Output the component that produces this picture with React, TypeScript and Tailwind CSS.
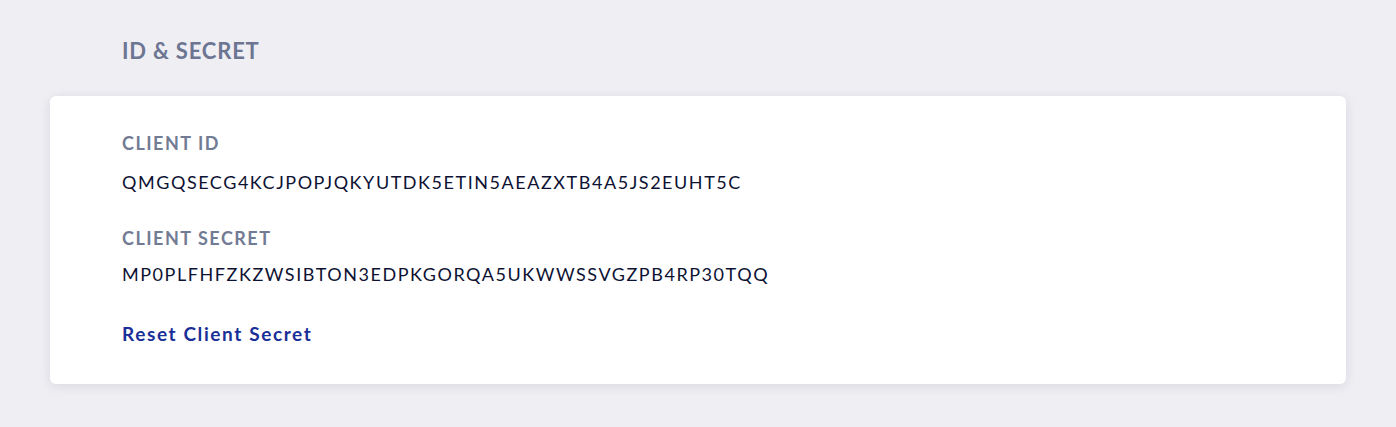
import React from "react";

export default function App() {
  return (
    <div className="min-h-[427px] w-full bg-[#efeef3] pt-[36px] pb-[44px]" style={{ fontFamily: "Lato, 'Noto Sans', sans-serif" }}>
      <h2 className="ml-[122px] text-[22px] leading-[30px] font-bold text-[#6c7591] tracking-[0.8px]">ID &amp; SECRET</h2>
      <div className="mx-[50px] mt-[30px] rounded-[6px] bg-white shadow-[0_2px_12px_rgba(30,30,60,0.10)] pl-[72px] pt-[35px] pb-[38px]">
        <div className="text-[18px] leading-[24px] font-bold text-[#727b94] tracking-[1.5px]">CLIENT ID</div>
        <div className="mt-[15px] text-[18px] leading-[24px] text-[#0d1233] tracking-[1.55px]">QMGQSECG4KCJPOPJQKYUTDK5ETIN5AEAZXTB4A5JS2EUHT5C</div>
        <div className="mt-[32px] text-[18px] leading-[24px] font-bold text-[#727b94] tracking-[1.5px]">CLIENT SECRET</div>
        <div className="mt-[12px] text-[18px] leading-[24px] text-[#0d1233] tracking-[1.55px]">MP0PLFHFZKZWSIBTON3EDPKGORQA5UKWWSSVGZPB4RP30TQQ</div>
        <a href="#" className="mt-[36px] block w-fit text-[19px] leading-[24px] font-bold text-[#1a2f98] tracking-[1.6px]">Reset Client Secret</a>
      </div>
    </div>
  );
}
